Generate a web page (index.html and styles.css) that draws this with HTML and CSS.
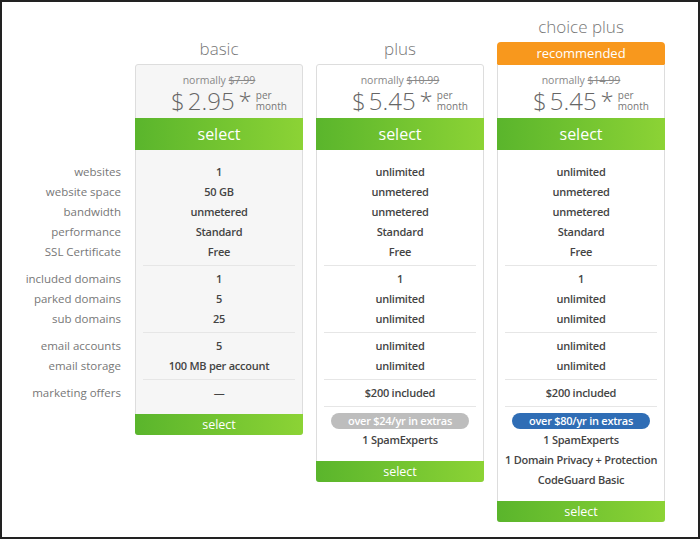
FILE: index.html
```html
<!DOCTYPE html>
<html>
<head>
<meta charset="utf-8">
<link rel="stylesheet" href="styles.css">
</head>
<body>
<div class="frame">
  <div class="labels">
    <div class="grp first">
      <div class="row">websites</div>
      <div class="row">website space</div>
      <div class="row">bandwidth</div>
      <div class="row">performance</div>
      <div class="row">SSL Certificate</div>
    </div>
    <div class="grp">
      <div class="row">included domains</div>
      <div class="row">parked domains</div>
      <div class="row">sub domains</div>
    </div>
    <div class="grp">
      <div class="row">email accounts</div>
      <div class="row">email storage</div>
    </div>
    <div class="grp last">
      <div class="row">marketing offers</div>
    </div>
  </div>

  <div class="plan">
    <div class="plan-head"><h2 class="plan-title">basic</h2></div>
    <div class="card card-basic">
      <div class="card-top">
        <div class="normally">normally <s>$7.99</s></div>
        <div class="price"><span class="cur">$</span><span class="amt">2.95</span><span class="star">*</span><span class="per">per<br>month</span></div>
      </div>
      <div class="btn-select">select</div>
      <div class="grp first">
        <div class="row">1</div>
        <div class="row">50 GB</div>
        <div class="row">unmetered</div>
        <div class="row">Standard</div>
        <div class="row">Free</div>
      </div>
      <div class="grp">
        <div class="row">1</div>
        <div class="row">5</div>
        <div class="row">25</div>
      </div>
      <div class="grp">
        <div class="row">5</div>
        <div class="row">100 MB per account</div>
      </div>
      <div class="grp last">
        <div class="row">—</div>
      </div>
      <div class="btn-bottom">select</div>
    </div>
  </div>

  <div class="plan">
    <div class="plan-head"><h2 class="plan-title">plus</h2></div>
    <div class="card">
      <div class="card-top">
        <div class="normally">normally <s>$10.99</s></div>
        <div class="price"><span class="cur">$</span><span class="amt">5.45</span><span class="star">*</span><span class="per">per<br>month</span></div>
      </div>
      <div class="btn-select">select</div>
      <div class="grp first">
        <div class="row">unlimited</div>
        <div class="row">unmetered</div>
        <div class="row">unmetered</div>
        <div class="row">Standard</div>
        <div class="row">Free</div>
      </div>
      <div class="grp">
        <div class="row">1</div>
        <div class="row">unlimited</div>
        <div class="row">unlimited</div>
      </div>
      <div class="grp">
        <div class="row">unlimited</div>
        <div class="row">unlimited</div>
      </div>
      <div class="grp">
        <div class="row">$200 included</div>
      </div>
      <div class="grp last">
        <div class="row"><span class="pill pill-gray">over $24/yr in extras</span></div>
        <div class="row">1 SpamExperts</div>
      </div>
      <div class="btn-bottom">select</div>
    </div>
  </div>

  <div class="plan">
    <div class="plan-head">
      <h2 class="plan-title">choice plus</h2>
      <div class="recommended">recommended</div>
    </div>
    <div class="card card-rec">
      <div class="card-top">
        <div class="normally">normally <s>$14.99</s></div>
        <div class="price"><span class="cur">$</span><span class="amt">5.45</span><span class="star">*</span><span class="per">per<br>month</span></div>
      </div>
      <div class="btn-select">select</div>
      <div class="grp first">
        <div class="row">unlimited</div>
        <div class="row">unmetered</div>
        <div class="row">unmetered</div>
        <div class="row">Standard</div>
        <div class="row">Free</div>
      </div>
      <div class="grp">
        <div class="row">1</div>
        <div class="row">unlimited</div>
        <div class="row">unlimited</div>
      </div>
      <div class="grp">
        <div class="row">unlimited</div>
        <div class="row">unlimited</div>
      </div>
      <div class="grp">
        <div class="row">$200 included</div>
      </div>
      <div class="grp last">
        <div class="row"><span class="pill pill-blue">over $80/yr in extras</span></div>
        <div class="row">1 SpamExperts</div>
        <div class="row">1 Domain Privacy + Protection</div>
        <div class="row">CodeGuard Basic</div>
      </div>
      <div class="btn-bottom">select</div>
    </div>
  </div>
</div>
</body>
</html>
```

FILE: styles.css
```css
* { box-sizing: border-box; }

html, body {
  margin: 0;
  padding: 0;
  background: #fff;
}

body {
  font-family: "Open Sans", "DejaVu Sans", sans-serif;
}

.frame {
  width: 700px;
  height: 539px;
  border: 2px solid #222;
  display: flex;
  align-items: flex-start;
  gap: 13px;
  overflow: hidden;
}

.labels {
  width: 119px;
  margin-right: 1px;
  padding-top: 148px;
  text-align: right;
  color: #777;
  font-size: 11.5px;
}

.labels .grp {
  margin: 0;
  border-bottom-color: transparent;
}

.plan {
  width: 168px;
  flex: none;
}

.plan-head {
  height: 62px;
  display: flex;
  flex-direction: column;
  justify-content: flex-end;
}

.plan-title {
  margin: 0 0 3px;
  font-size: 17px;
  line-height: 24px;
  font-weight: 300;
  color: #777;
  text-align: center;
}

.recommended {
  height: 22px;
  line-height: 22px;
  background: #f8981d;
  color: #fff;
  font-size: 13px;
  text-align: center;
  border-radius: 4px 4px 0 0;
}

.card {
  border: 1px solid #ddd;
  border-radius: 3px;
  background: #fff;
  text-align: center;
}

.card-basic {
  background: #f6f6f6;
}

.card-rec {
  border-top-color: #f8981d;
  border-radius: 0 0 3px 3px;
}

.card-top {
  padding: 8px 0 3px;
}

.normally {
  font-size: 10.5px;
  line-height: 14px;
  color: #888;
}

.normally s {
  color: #888;
}

.price {
  font-size: 24px;
  line-height: 28px;
  font-weight: 300;
  color: #666;
  padding-left: 20px;
  white-space: nowrap;
}

.cur {
  margin-right: 3px;
}

.star {
  margin-left: 4px;
  margin-right: 4px;
}

.per {
  display: inline-block;
  font-size: 10px;
  line-height: 11px;
  font-weight: 400;
  text-align: left;
  color: #777;
}

.btn-select {
  margin: 0 -1px;
  height: 32px;
  line-height: 32px;
  font-size: 16px;
  color: #fff;
  background: linear-gradient(to right, #5ab52c, #8cd335);
}

.btn-bottom {
  margin: 0 -1px -1px;
  height: 21px;
  line-height: 21px;
  font-size: 12.5px;
  color: #fff;
  background: linear-gradient(to right, #5ab52c, #8cd335);
  border-radius: 0 0 3px 3px;
}

.grp {
  margin: 0 7px;
  padding: 3px 0;
  border-bottom: 1px solid #e6e6e6;
}

.grp.first {
  padding-top: 12px;
}

.grp.last {
  border-bottom: none;
  padding-bottom: 11px;
}

.row {
  line-height: 20px;
  height: 20px;
  white-space: nowrap;
}

.card .row {
  font-size: 11px;
  font-weight: 600;
  letter-spacing: -0.25px;
  color: #444;
}

.pill {
  display: inline-block;
  height: 16px;
  line-height: 16px;
  padding: 0 17px;
  border-radius: 8px;
  color: #fff;
  font-weight: 600;
  vertical-align: middle;
}

.pill-gray {
  background: #bdbdbd;
}

.pill-blue {
  background: #2f6db5;
}
```
